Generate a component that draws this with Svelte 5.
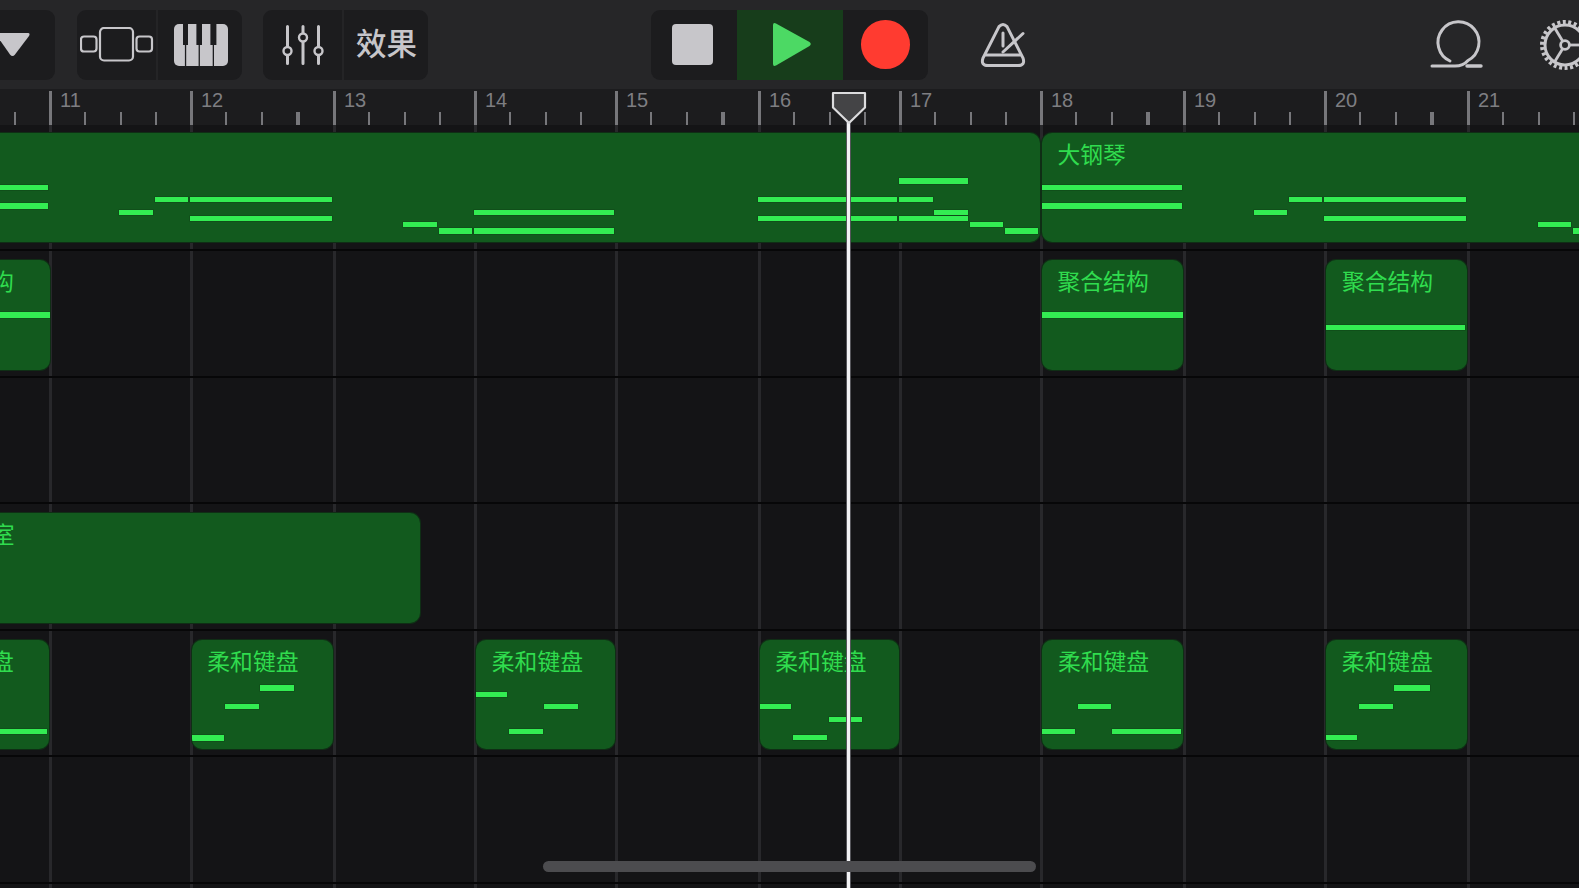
<script lang="ts">
	const bars = [50, 191, 334, 475, 616, 759, 900, 1041, 1184, 1325, 1468];
	const barNames = [11, 12, 13, 14, 15, 16, 17, 18, 19, 20, 21];
	const beats = [-35, 35, 71, 106];

	// note rows inside the long piano regions
	const Y = { a: 54, b: 66.3, c: 72.6, d: 79, e: 85.3, f: 91.3, g: 97.6, top: 47.6 };

	const pianoA = [
		[Y.a, -40, 47.5], [Y.c, -40, 47.5],
		[Y.d, 119.3, 153.5], [Y.b, 154.5, 188], [Y.b, 190, 331.6], [Y.e, 190, 331.6],
		[Y.f, 403.3, 437.5], [Y.g, 438.8, 472], [Y.d, 474, 613.5], [Y.g, 474, 613.5],
		[Y.b, 758.2, 897], [Y.e, 758.2, 897],
		[Y.top, 899.2, 968], [Y.b, 899.2, 932.6], [Y.d, 934.3, 968], [Y.e, 899.2, 968],
		[Y.f, 969.5, 1003.3], [Y.g, 1004.6, 1038.5]
	];
	const pianoB = [
		[Y.a, 1042, 1181.6], [Y.c, 1042, 1181.6],
		[Y.d, 1253.8, 1287], [Y.b, 1288.5, 1322.2], [Y.b, 1324.3, 1465.6], [Y.e, 1324.3, 1465.6],
		[Y.f, 1537.8, 1571.4], [Y.g, 1573, 1600]
	];

	const tracks = [
		[
			{ l: -100, r: 1040, notes: pianoA },
			{ l: 1042, r: 1640, label: '大钢琴', notes: pianoB }
		],
		[
			{ l: -93, r: 50, label: '聚合结构', notes: [[54.3, -93, 50]] },
			{ l: 1042, r: 1183.3, label: '聚合结构', notes: [[54.3, 1042, 1183.3]] },
			{ l: 1326.4, r: 1467.3, label: '聚合结构', notes: [[66.7, 1326.4, 1465.5]] }
		],
		[],
		[{ l: -400, r: 420.4, label: '琴室', labelX: 369, notes: [] }],
		[
			{ l: -93, r: 49, label: '柔和键盘', notes: [[91.3, -93, 47]] },
			{ l: 191.8, r: 333.5, label: '柔和键盘', notes: [[47.7, 260.4, 293.9], [66.3, 225.3, 258.8], [97.7, 191.8, 223.7]] },
			{ l: 476.3, r: 615, label: '柔和键盘', notes: [[54, 476.3, 507.3], [66.3, 544.5, 578], [91.3, 509.4, 542.9]] },
			{ l: 759.8, r: 898.7, label: '柔和键盘', notes: [[66.3, 759.8, 791.5], [79, 828.6, 862.2], [97.3, 793.3, 826.8]] },
			{ l: 1042.4, r: 1183, label: '柔和键盘', notes: [[66.3, 1077.7, 1111.3], [91.3, 1042.4, 1075.3], [91.3, 1112.4, 1181.3]] },
			{ l: 1326.2, r: 1467.5, label: '柔和键盘', notes: [[47.7, 1394.5, 1429.8], [66.3, 1359.2, 1392.7], [97.3, 1326.2, 1357.3]] }
		],
		[]
	];

	const spokes = [[-10, -16.5], [-10.5, 17], [19.5, 0]];
</script>

<div class="app">
	<header class="toolbar">
		<div class="group first">
			<svg class="tri" viewBox="0 0 36 27" width="36" height="27">
				<path d="M3 2 H33 Q35.5 2 34 5 L20 23.5 Q17.5 26.5 15 23.5 L2 5 Q0.5 2 3 2 Z" fill="#c7c6ca" />
			</svg>
		</div>

		<div class="group second">
			<div class="cell tracks-btn">
				<svg viewBox="0 0 74 36" width="74" height="36" fill="none" stroke="#c7c6ca" stroke-width="2.2">
					<rect x="1" y="9.5" width="15.5" height="15" rx="3" />
					<rect x="20" y="1" width="33" height="32.5" rx="4" />
					<rect x="56.5" y="9.5" width="15.5" height="15" rx="3" />
				</svg>
			</div>
			<div class="cell piano-btn">
				<svg viewBox="0 0 54 42" width="54" height="42">
					<rect width="54" height="42" rx="5" fill="#c7c6ca" />
					<g fill="#1c1c1e">
						<rect x="9" y="0" width="5" height="21" />
						<rect x="22.4" y="0" width="5.6" height="21" />
						<rect x="36.4" y="0" width="6" height="21" />
						<rect x="10.9" y="21" width="1.3" height="21" />
						<rect x="24.6" y="21" width="1.3" height="21" />
						<rect x="38.7" y="21" width="1.3" height="21" />
					</g>
				</svg>
			</div>
		</div>

		<div class="group third">
			<div class="cell mixer-btn">
				<svg viewBox="0 0 42 40" width="42" height="40" stroke="#c7c6ca" stroke-width="3" fill="#1c1c1e" stroke-linecap="round">
					<path d="M5.5 1.5 V38.5 M21 1.5 V38.5 M36.5 1.5 V38.5" fill="none" />
					<circle cx="5.5" cy="26" r="4" stroke-width="2.4" />
					<circle cx="21" cy="12.5" r="4" stroke-width="2.4" />
					<circle cx="36.5" cy="26" r="4" stroke-width="2.4" />
				</svg>
			</div>
			<div class="cell fx-btn">效果</div>
		</div>

		<div class="group transport">
			<div class="cell stop-btn"><span class="stop"></span></div>
			<div class="cell play-btn">
				<svg viewBox="0 0 40 45" width="40" height="45">
					<path d="M1 3 Q1 0 4 1.4 L37.5 20 Q40 22 37.5 24 L4 43.6 Q1 45 1 42 Z" fill="#4cd964" />
				</svg>
			</div>
			<div class="cell rec-btn"><span class="rec"></span></div>
		</div>

		<svg class="metronome" viewBox="0 0 46 46" width="46" height="46" fill="none" stroke="#c7c6ca" stroke-width="3" stroke-linecap="round">
			<path d="M19 4.6 Q23 0.4 27 4.6 L43 36 Q45.5 43.5 38 43.5 H8 Q0.5 43.5 3 36 Z" />
			<path d="M6 33 H40" />
			<path d="M23 11 V24" />
			<path d="M23 30 L43 11.5" />
		</svg>

		<svg class="loop" viewBox="0 0 56 50" width="56" height="50" fill="none" stroke="#c7c6ca" stroke-width="3" stroke-linecap="round">
			<path d="M22 41 A20.5 20.5 0 1 1 40 40.5 C37 44 33 46 27 46 H4" />
			<path d="M39 46 H53" stroke-width="3.4" />
		</svg>

		<svg class="gear" viewBox="-28 -28 56 56" width="56" height="56" fill="none" stroke="#c7c6ca">
			<circle r="23" stroke-width="4" stroke-dasharray="3 2.55" />
			<circle r="20" stroke-width="3" />
			<circle r="4.4" stroke-width="2.8" />
			{#each spokes as [dx, dy]}
				<path d={`M${dx * 0.24} ${dy * 0.24} L${dx} ${dy}`} stroke-width="2.8" />
			{/each}
		</svg>
	</header>

	<div class="ruler">
		{#each bars as x, i}
			<span class="bar-tick" style="left: {x - 1.5}px"></span>
			<span class="bar-num" style="left: {x + 10}px">{barNames[i]}</span>
			{#each beats as b}
				<span class="beat" style="left: {x + b - 1}px"></span>
			{/each}
		{/each}
	</div>

	<div class="tracks">
		{#each bars as x}
			<span class="gridline" style="left: {x - 1.5}px"></span>
		{/each}

		{#each tracks as regions}
			<div class="track">
				{#each regions as reg}
					<div class="region" style="left: {reg.l}px; width: {reg.r - reg.l}px">
						{#if reg.label}
							<span class="label" style="left: {reg.labelX ?? 15.5}px">{reg.label}</span>
						{/if}
						{#each reg.notes as [y, a, b]}
							<span class="note" style="top: {y - 2.5}px; left: {a - reg.l}px; width: {b - a}px"></span>
						{/each}
					</div>
				{/each}
			</div>
		{/each}
	</div>

	<div class="playhead-line"></div>
	<svg class="playhead" viewBox="0 0 36 34" width="36" height="34">
		<path d="M2 2 H34 V16.5 L18 32 L2 16.5 Z" fill="#444446" stroke="#dcdcde" stroke-width="2.2" stroke-linejoin="round" />
	</svg>

	<div class="scrollbar"></div>
</div>

<style>
	:global(body) {
		background: #141416;
	}

	.app {
		position: relative;
		width: 1579px;
		height: 888px;
		overflow: hidden;
		background: #141416;
		font-family: 'Noto Sans CJK SC', 'Liberation Sans', sans-serif;
	}

	.toolbar {
		position: relative;
		display: flex;
		align-items: center;
		height: 89px;
		background: #262628;
	}

	.group {
		display: flex;
		align-items: stretch;
		height: 70px;
		border-radius: 9px;
		background: #1c1c1e;
		overflow: hidden;
		flex: none;
	}

	.cell {
		box-sizing: border-box;
		display: flex;
		align-items: center;
		justify-content: center;
		flex: none;
	}

	.first {
		width: 75px;
		margin-left: -20px;
		align-items: center;
	}

	.tri {
		margin: 0 0 0 15px;
	}

	.second {
		margin-left: 22px;
	}

	.tracks-btn {
		width: 81px;
		border-right: 2px solid #242426;
	}

	.piano-btn {
		width: 84px;
		padding-left: 2px;
	}

	.third {
		margin-left: 21px;
	}

	.mixer-btn {
		width: 81px;
		border-right: 2px solid #242426;
	}

	.fx-btn {
		width: 84px;
		color: #c7c6ca;
		font-size: 30.5px;
		font-weight: 500;
		line-height: 1;
		padding: 0 0 4px 1px;
	}

	.transport {
		margin-left: 223px;
		width: 277px;
	}

	.stop-btn {
		width: 86px;
		padding-right: 4px;
	}

	.stop {
		width: 41px;
		height: 41px;
		border-radius: 4px;
		background: #c7c6ca;
	}

	.play-btn {
		width: 106px;
		background: #173d1b;
		padding-left: 4px;
	}

	.rec-btn {
		width: 85px;
	}

	.rec {
		width: 48.5px;
		height: 48.5px;
		border-radius: 50%;
		background: #ff3b30;
	}

	.metronome {
		flex: none;
		margin-left: 52px;
	}

	.loop {
		flex: none;
		margin-left: 402px;
	}

	.gear {
		flex: none;
		margin-left: 53px;
	}

	.ruler {
		position: relative;
		height: 36px;
		background: #1c1c1e;
	}

	.bar-tick {
		position: absolute;
		top: 2px;
		bottom: -5px;
		width: 3px;
		background: linear-gradient(#77777b 91%, #2e2e30 91%);
	}

	.beat {
		position: absolute;
		bottom: 0;
		width: 2px;
		height: 13px;
		background: #77777b;
	}

	.bar-num {
		position: absolute;
		top: 0;
		font-family: 'Liberation Sans', sans-serif;
		font-size: 20px;
		line-height: 22px;
		color: #7e7e82;
	}

	.tracks {
		position: relative;
		height: 763px;
	}

	.gridline {
		position: absolute;
		top: 0;
		bottom: 0;
		width: 3px;
		background: #28282b;
	}

	.track {
		position: relative;
		box-sizing: border-box;
		height: 126.5px;
		border-bottom: 2px solid #070708;
	}

	.track:first-of-type {
		height: 126px;
	}

	.region {
		position: absolute;
		top: 9px;
		height: 109.5px;
		border-radius: 10px;
		background: #125a1e;
		box-shadow: 0 0 0 1px #0f2e15;
		overflow: hidden;
	}

	.track:first-of-type .region {
		top: 7.7px;
	}

	.label {
		position: absolute;
		top: 6px;
		font-size: 22.8px;
		line-height: 30px;
		white-space: nowrap;
		color: #30dc4e;
	}

	.note {
		position: absolute;
		height: 5.5px;
		margin-top: 0.5px;
		background: #33ec52;
		box-shadow: 0 0 0 0.5px #0e4517;
	}

	.playhead-line {
		position: absolute;
		left: 846.5px;
		top: 120px;
		bottom: 0;
		width: 3px;
		background: #f2f2f4;
		box-shadow: 0 0 0 1px #55555a;
	}

	.playhead {
		position: absolute;
		left: 830.5px;
		top: 90.5px;
	}

	.scrollbar {
		position: absolute;
		left: 543px;
		top: 861px;
		width: 493px;
		height: 11px;
		border-radius: 5.5px;
		background: #4c4c4f;
	}
</style>
